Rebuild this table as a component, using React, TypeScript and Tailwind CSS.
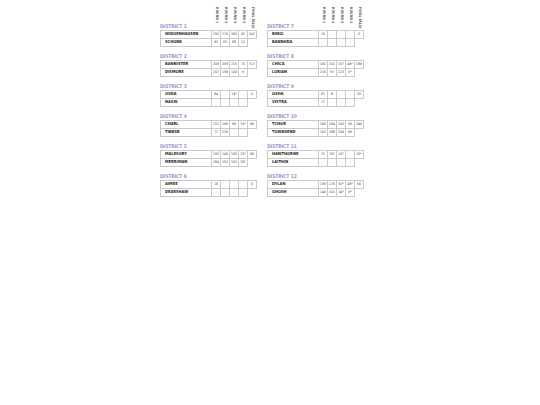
import { FC } from 'react'

type Row = [string, string[]]
interface District {
  id: number
  rows: Row[]
}

const leftDistricts: District[] = [
  { id: 1, rows: [['WIDGENHAUSEN', ['255', '279', '300', '92', '547']], ['SCHOBB', ['93', '65', '88', '12']]] },
  { id: 2, rows: [['BANNISTER', ['209', '209', '215', '70', '517']], ['DISMORE', ['157', '158', '100', '9']]] },
  { id: 3, rows: [['OVDA', ['84', '-', '74*', '-', '0']], ['NASW', ['-', '-', '-', '-']]] },
  { id: 4, rows: [['CHARL', ['221', '190', '90', '15*', '96']], ['TIBBSB', ['77', '129', '-', '-']]] },
  { id: 5, rows: [['MALESORY', ['105', '140', '155', '25*', '98']], ['MERRIMAN', ['284', '152', '151', '28*']]] },
  { id: 6, rows: [['AIMEE', ['18', '-', '-', '-', '0']], ['DEARSHAW', ['-', '-', '-', '-']]] }
]

const rightDistricts: District[] = [
  { id: 7, rows: [['BINGI', ['16', '-', '-', '-', '0']], ['BANNHDA', ['-', '-', '-', '-']]] },
  { id: 8, rows: [['CHICA', ['192', '202', '157', '49*', '189']], ['LORIAN', ['216', '97', '123', '5*']]] },
  { id: 9, rows: [['OSHA', ['87', '8', '-', '-', '30']], ['VISTRA', ['17', '-', '-', '-']]] },
  { id: 10, rows: [['TCHOR', ['185', '184', '100', '56', '346']], ['TOWNSEND', ['262', '188', '204', '90']]] },
  { id: 11, rows: [['HAWTHORNE', ['22', '20*', '10*', '-', '20*']], ['LAITHIN', ['-', '-', '-', '-']]] },
  { id: 12, rows: [['DYLAN', ['169', '176', '92*', '48*', '90']], ['GHOSH', ['140', '101', '34*', '8*']]] }
]

const labels = ['ROUND 1', 'ROUND 2', 'ROUND 3', 'ROUND 4', 'FINAL TALLY']

const font = { fontFamily: '"Liberation Sans Narrow", "DejaVu Sans Condensed", "Liberation Sans", sans-serif' }

const DistrictColumn: FC<{ districts: District[] }> = ({ districts }) => {
  return (
    <div className="flex w-[97px] flex-col">
      <div className="flex h-[15px] justify-end">
        {labels.map((label) => (
          <div key={label} className="flex w-[9px] justify-center pt-[1px]">
            <span className="text-[3.5px] leading-none font-bold whitespace-nowrap text-[#666] [writing-mode:vertical-rl]">
              {label}
            </span>
          </div>
        ))}
      </div>
      {districts.map((district) => (
        <div key={district.id} className="flex h-[30px] flex-col">
          <div className="flex h-[9px] items-end pb-[1.5px] text-[5px] leading-none font-bold tracking-tight text-[#a193cc]">
            DISTRICT {district.id}
          </div>
          <div className="flex flex-col">
            {district.rows.map(([name, values], i) => (
              <div key={name} className="flex">
                <div
                  className={`flex h-[8.5px] w-[52px] items-center border-r border-b border-l border-[#c9c9c9] pl-[4px] text-[4px] font-bold text-[#1f1f1f] ${
                    i === 0 ? 'border-t' : ''
                  }`}
                >
                  {name}
                </div>
                {values.map((v, j) => (
                  <div
                    key={j}
                    className={`flex h-[8.5px] w-[9px] items-center justify-center border-r border-b border-[#c9c9c9] text-[3.5px] text-[#444] ${
                      i === 0 ? 'border-t' : ''
                    }`}
                  >
                    {v}
                  </div>
                ))}
              </div>
            ))}
          </div>
        </div>
      ))}
    </div>
  )
}

export default function App() {
  return (
    <div className="h-[405px] w-[540px] bg-white" style={font}>
      <div className="flex gap-[10px] pt-[6px] pl-[160px]">
        <DistrictColumn districts={leftDistricts} />
        <DistrictColumn districts={rightDistricts} />
      </div>
    </div>
  )
}
